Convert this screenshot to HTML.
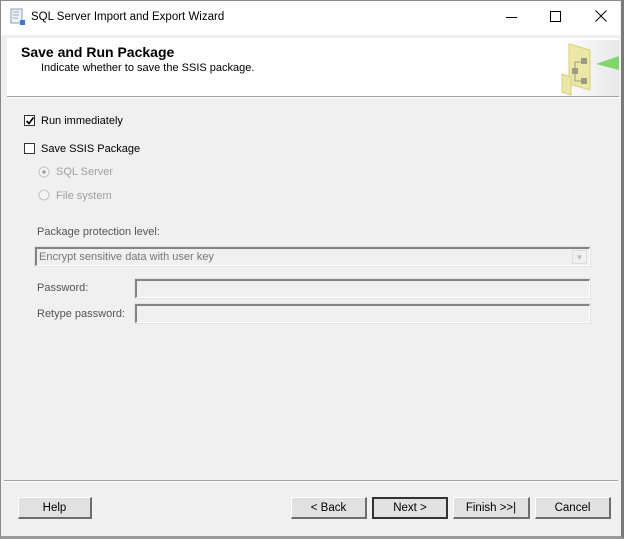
<!DOCTYPE html>
<html><head><style>
*{margin:0;padding:0;box-sizing:border-box}
body{width:624px;height:539px;background:#f0f0f0;font-family:"Liberation Sans",Arial,sans-serif;font-size:11px;color:#000;position:relative;overflow:hidden}
.a{position:absolute}
.btn{position:absolute;top:497px;height:22px;background:#e1e1e1;border-top:1px solid #fff;border-left:1px solid #fff;border-right:2px solid #6e6e6e;border-bottom:2px solid #6e6e6e;text-align:center;line-height:20px;font-size:11.5px}
.dis{color:#a0a0a0}
.box{position:absolute;background:#f0f0f0;border-top:2px solid #838383;border-left:2px solid #838383;border-right:1px solid #fff;border-bottom:1px solid #fff;outline:1px solid #e3e3e3}
.cb{position:absolute;width:11px;height:11px;border:1px solid #333;background:#fff}
</style></head><body>
<div class="a" style="left:0;top:0;width:624px;height:539px;border:1px solid #8a8a8a;border-right:3px solid #7a7a7a;border-bottom:3px solid #9a9a9a"></div>
<div class="a" style="left:1px;top:1px;width:619px;height:34px;background:#fff"></div>
<svg class="a" style="left:9px;top:8px" width="18" height="18" viewBox="0 0 18 18"><rect x="2" y="1" width="11" height="14" fill="#eef2f8" stroke="#8a9ab5"/><path d="M4 4h6M4 7h6M4 10h5" stroke="#9aa7c0"/><rect x="11" y="12" width="5" height="5" fill="#3a78d6"/></svg>
<div class="a" style="left:31px;top:11px;font-size:11.5px">SQL Server Import and Export Wizard</div>
<div class="a" style="left:506px;top:17px;width:11px;height:1px;background:#000"></div>
<div class="a" style="left:550px;top:11px;width:11px;height:11px;border:1px solid #000"></div>
<svg class="a" style="left:595px;top:10px" width="12" height="12"><path d="M0.5 0.5L11.5 11.5M11.5 0.5L0.5 11.5" stroke="#000"/></svg>
<div class="a" style="left:7px;top:38px;width:612px;height:58px;background:#fff"></div>
<div class="a" style="left:7px;top:96px;width:612px;height:1px;background:#a0a0a0"></div>
<div class="a" style="left:7px;top:97px;width:612px;height:1px;background:#fff"></div>
<div class="a" style="left:21px;top:44px;font-size:14px;font-weight:bold">Save and Run Package</div>
<div class="a" style="left:41px;top:62px">Indicate whether to save the SSIS package.</div>
<svg class="a" style="left:560px;top:40px" width="59" height="56"><defs><linearGradient id="g" x1="0" x2="1"><stop offset="0" stop-color="#fff"/><stop offset="1" stop-color="#e8e8e8"/></linearGradient></defs><rect width="59" height="56" fill="url(#g)"/><path d="M9 4L30 10V50L9 44Z" fill="#ece7a6" stroke="#d8cf7e"/><path d="M2 34L11 37V55L2 52Z" fill="#ece7a6" stroke="#d8cf7e"/><rect x="21" y="18" width="6" height="6" fill="#9c9c80"/><rect x="12" y="28" width="6" height="6" fill="#9c9c80"/><rect x="21" y="38" width="6" height="6" fill="#9c9c80"/><path d="M15 28V22H21M15 34V41H21" stroke="#9c9c80" fill="none"/><path d="M36 24L59 16V30Z" fill="#7fd66a"/></svg>
<div class="cb" style="left:24px;top:115px"></div>
<svg class="a" style="left:25px;top:116px" width="10" height="10"><path d="M1.5 5L4 7.5L8.5 1.5" stroke="#000" stroke-width="1.6" fill="none"/></svg>
<div class="a" style="left:41px;top:115px">Run immediately</div>
<div class="cb" style="left:24px;top:143px"></div>
<div class="a" style="left:41px;top:143px">Save SSIS Package</div>
<svg class="a" style="left:38px;top:166px" width="12" height="12"><circle cx="6" cy="6" r="5" fill="#f4f4f4" stroke="#c4c4c4"/><circle cx="6" cy="6" r="1.7" fill="#a0a0a0"/></svg>
<div class="a dis" style="left:56px;top:166px">SQL Server</div>
<svg class="a" style="left:38px;top:189px" width="12" height="12"><circle cx="6" cy="6" r="5" fill="#f4f4f4" stroke="#c4c4c4"/></svg>
<div class="a dis" style="left:56px;top:190px">File system</div>
<div class="a" style="left:37px;top:226px;color:#555">Package protection level:</div>
<div class="box" style="left:35px;top:247px;width:555px;height:19px"></div>
<div class="a" style="left:572px;top:250px;width:15px;height:14px;border:1px solid #ddd;color:#bbb;font-size:8px;text-align:center;line-height:13px">▼</div>
<div class="a" style="left:39px;top:251px;color:#777">Encrypt sensitive data with user key</div>
<div class="a" style="left:37px;top:282px;color:#555">Password:</div>
<div class="box" style="left:135px;top:279px;width:455px;height:19px"></div>
<div class="a" style="left:37px;top:308px;color:#555">Retype password:</div>
<div class="box" style="left:135px;top:304px;width:455px;height:19px"></div>
<div class="a" style="left:4px;top:480px;width:614px;height:1px;background:#a0a0a0"></div>
<div class="a" style="left:4px;top:481px;width:614px;height:1px;background:#fff"></div>
<div class="btn" style="left:18px;width:74px">Help</div>
<div class="btn" style="left:291px;width:76px">&lt; Back</div>
<div class="btn" style="left:372px;width:76px;border:2px solid #333;line-height:19px">Next &gt;</div>
<div class="btn" style="left:453px;width:77px">Finish &gt;&gt;|</div>
<div class="btn" style="left:535px;width:76px">Cancel</div>
</body></html>
